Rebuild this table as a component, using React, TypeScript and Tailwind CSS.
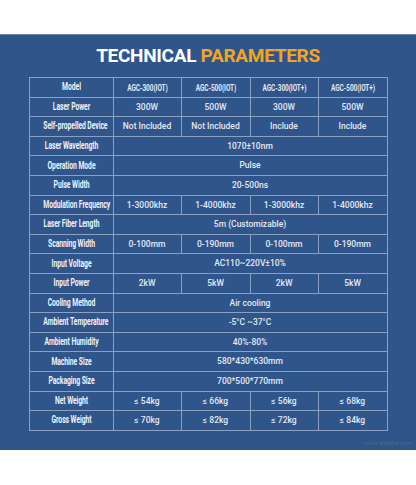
const specs: { label: string; values: string[] }[] = [
  { label: "Model", values: ["AGC-300(IOT)", "AGC-500(IOT)", "AGC-300(IOT+)", "AGC-500(IOT+)"] },
  { label: "Laser Power", values: ["300W", "500W", "300W", "500W"] },
  { label: "Self-propelled Device", values: ["Not Included", "Not Included", "Include", "Include"] },
  { label: "Laser Wavelength", values: ["1070±10nm"] },
  { label: "Operation Mode", values: ["Pulse"] },
  { label: "Pulse Width", values: ["20-500ns"] },
  { label: "Modulation Frequency", values: ["1-3000khz", "1-4000khz", "1-3000khz", "1-4000khz"] },
  { label: "Laser Fiber Length", values: ["5m (Customizable)"] },
  { label: "Scanning Width", values: ["0-100mm", "0-190mm", "0-100mm", "0-190mm"] },
  { label: "Input Voltage", values: ["AC110~220V±10%"] },
  { label: "Input Power", values: ["2kW", "5kW", "2kW", "5kW"] },
  { label: "Cooling Method", values: ["Air cooling"] },
  { label: "Ambient Temperature", values: ["-5°C ~37°C"] },
  { label: "Ambient Humidity", values: ["40%-80%"] },
  { label: "Machine Size", values: ["580*430*630mm"] },
  { label: "Packaging Size", values: ["700*500*770mm"] },
  { label: "Net Weight", values: ["≤ 54kg", "≤ 66kg", "≤ 56kg", "≤ 68kg"] },
  { label: "Gross Weight", values: ["≤ 70kg", "≤ 82kg", "≤ 72kg", "≤ 84kg"] },
];

// the source uses a condensed bold face; squeeze Roboto to match
function Condensed({ children, size }: { children: string; size: string }) {
  return (
    <span
      className={`block origin-center scale-x-[0.68] font-['Roboto',sans-serif] font-bold leading-none tracking-[-0.1px] ${size}`}
    >
      {children}
    </span>
  );
}

export default function App() {
  return (
    <div className="h-[485px] w-[416px] bg-white pt-[34px]">
      <section className="relative flex h-[416px] flex-col items-center border-t border-[#6a86b0] bg-[#30558b] pt-[10px]">
        <h1 className="font-['Roboto',sans-serif] text-[19px] font-bold leading-[22px] tracking-[-0.3px]">
          <span className="text-white">TECHNICAL </span>
          <span className="text-[#f5a51c]">PARAMETERS</span>
        </h1>

        <table className="mt-[10px] w-[359px] table-fixed border-collapse">
          <colgroup>
            <col className="w-[84px]" />
            <col className="w-[68px]" />
            <col className="w-[69px]" />
            <col className="w-[68px]" />
            <col className="w-[69px]" />
          </colgroup>
          <tbody>
            {specs.map((row, i) => (
              <tr key={row.label} className="h-[19.6px]">
                <th className="whitespace-nowrap border border-[#8aa1c4] p-0 text-center align-middle text-[#eef2f9]">
                  <Condensed size="text-[10px]">{row.label}</Condensed>
                </th>
                {row.values.map((v, j) => (
                  <td
                    key={j}
                    colSpan={row.values.length === 1 ? 4 : 1}
                    className="whitespace-nowrap border border-[#8aa1c4] p-0 text-center align-middle font-['Roboto',sans-serif] text-[8.5px] font-medium leading-none text-[#e2e9f4]"
                  >
                    {i === 0 ? <Condensed size="text-[9.5px]">{v}</Condensed> : v}
                  </td>
                ))}
              </tr>
            ))}
          </tbody>
        </table>

        <span className="absolute bottom-[3px] right-[4px] font-['Roboto',sans-serif] text-[6px] text-[#4f7a8a] opacity-70">
          www.alibaba.com
        </span>
      </section>
    </div>
  );
}
